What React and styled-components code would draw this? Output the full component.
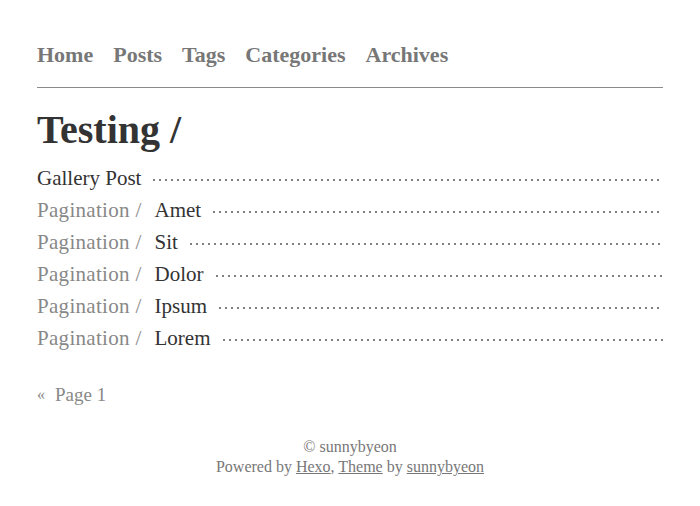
import React from 'react';
import styled, { createGlobalStyle } from 'styled-components';

const GlobalStyle = createGlobalStyle`
  body {
    margin: 0;
    background: #fff;
    font-family: "Liberation Serif", "DejaVu Serif", serif;
  }
`;

const Page = styled.div`
  padding: 38px 37px 0 37px;
`;

const Nav = styled.nav`
  display: flex;
  gap: 20px;
  padding-bottom: 16px;
  border-bottom: 1px solid #8a8a8a;
`;

const NavLink = styled.a`
  font-size: 22px;
  line-height: 33px;
  font-weight: bold;
  color: #777;
  text-decoration: none;
`;

const Title = styled.h1`
  margin: 19px 0 9px;
  font-size: 40px;
  line-height: 46px;
  font-weight: bold;
  color: #333;
`;

const List = styled.ul`
  list-style: none;
  margin: 0;
  padding: 0;
`;

const Row = styled.li`
  display: flex;
  align-items: center;
  height: 32px;
  font-size: 21px;
`;

const Category = styled.span`
  color: #888;
  margin-right: 13px;
  letter-spacing: 0.3px;
  white-space: nowrap;
`;

const PostTitle = styled.a`
  color: #333;
  text-decoration: none;
  white-space: nowrap;
`;

const Leader = styled.span`
  flex: 1;
  height: 2px;
  margin: 3px 0 0 12px;
  background-image: linear-gradient(to right, #808080 2px, transparent 2px);
  background-size: 6px 2px;
  background-repeat: repeat-x;
`;

const Pager = styled.div`
  display: flex;
  align-items: center;
  gap: 10px;
  margin-top: 25px;
  height: 32px;
  color: #888;
`;

const Prev = styled.span`
  font-size: 16px;
`;

const PageLabel = styled.span`
  font-size: 19px;
`;

const Footer = styled.footer`
  margin-top: 26px;
  text-align: center;
  font-size: 16px;
  line-height: 20px;
  color: #777;
`;

const FooterLink = styled.a`
  color: #777;
  text-decoration: underline;
`;

const posts = [
  { title: 'Gallery Post' },
  { category: 'Pagination', title: 'Amet' },
  { category: 'Pagination', title: 'Sit' },
  { category: 'Pagination', title: 'Dolor' },
  { category: 'Pagination', title: 'Ipsum' },
  { category: 'Pagination', title: 'Lorem' },
];

export default function App() {
  return (
    <>
      <GlobalStyle />
      <Page>
        <Nav>
          {['Home', 'Posts', 'Tags', 'Categories', 'Archives'].map(item => (
            <NavLink key={item} href="#">
              {item}
            </NavLink>
          ))}
        </Nav>
        <Title>Testing /</Title>
        <List>
          {posts.map(post => (
            <Row key={post.title}>
              {post.category && <Category>{post.category} /</Category>}
              <PostTitle href="#">{post.title}</PostTitle>
              <Leader />
            </Row>
          ))}
        </List>
        <Pager>
          <Prev>«</Prev>
          <PageLabel>Page 1</PageLabel>
        </Pager>
        <Footer>
          <div>© sunnybyeon</div>
          <div>
            Powered by <FooterLink href="#">Hexo</FooterLink>,{' '}
            <FooterLink href="#">Theme</FooterLink> by{' '}
            <FooterLink href="#">sunnybyeon</FooterLink>
          </div>
        </Footer>
      </Page>
    </>
  );
}
